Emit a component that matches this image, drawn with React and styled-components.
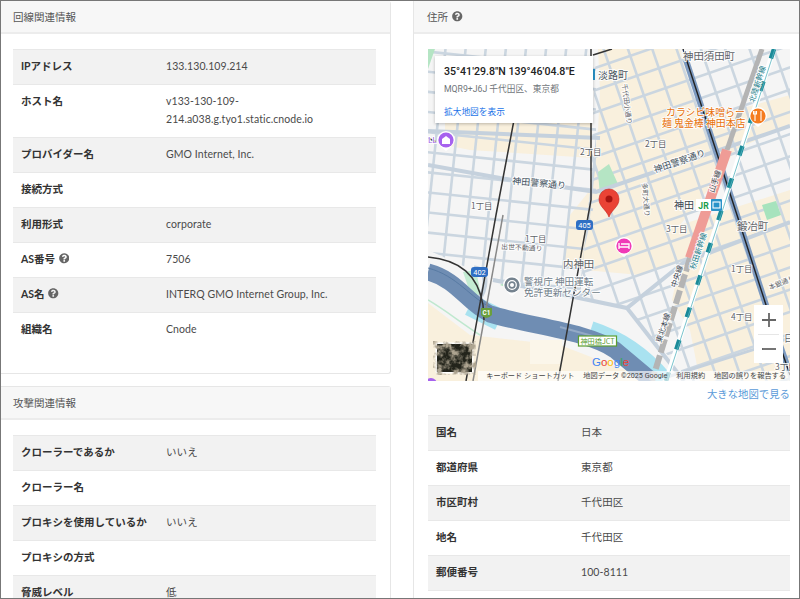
import React from 'react';
import styled, { createGlobalStyle } from 'styled-components';
import { FaQuestionCircle } from 'react-icons/fa';

const GlobalStyle = createGlobalStyle`
    html, body {
        margin: 0;
        padding: 0;
        background: #fff;
    }
    body {
        font-family: Lato, "Noto Sans CJK JP", sans-serif;
        font-size: 10.5px;
        color: #4a4a4a;
    }
`;

// Outer frame of the screenshot
const Frame = styled.div`
    box-sizing: border-box;
    width: 800px;
    height: 599px;
    border: 1px solid #777;
    overflow: hidden;
    display: flex;
    gap: 22px;
    align-items: flex-start;
`;

const LeftColumn = styled.div`
    width: 390px;
    flex: none;
    display: flex;
    flex-direction: column;
    gap: 12px;
`;

const RightColumn = styled.div`
    flex: 1;
    min-width: 0;
`;

const Card = styled.section`
    box-sizing: border-box;
    background: #fff;
    border-bottom: ${props => props.$open ? 'none' : '1px solid #e6e6e6'};
    border-left: ${props => props.$open ? '1px solid #e6e6e6' : 'none'};
    border-top: ${props => props.$first ? 'none' : '1px solid #e6e6e6'};
    border-right: ${props => props.$open ? 'none' : '1px solid #e6e6e6'};
    border-radius: ${props => props.$open ? '0' : '0 3px 3px 0'};
`;

const CardHeader = styled.h3`
    margin: 0;
    height: 31px;
    display: flex;
    align-items: center;
    gap: 3px;
    padding: 0 ${props => props.$open ? '13px' : '12px'};
    background: #f7f7f7;
    border-bottom: 2px solid #ececec;
    font-size: 10.5px;
    font-weight: 400;
    color: #555;
`;

const CardBody = styled.div`
    padding: ${props => props.$open ? '15px 9px 30px 14px' : '15px 14px 26px 12px'};
`;

const HelpIcon = styled(FaQuestionCircle)`
    color: #666;
    font-size: 10.5px;
    margin-left: 1px;
    vertical-align: -1px;
`;

const InfoTable = styled.table`
    width: 100%;
    table-layout: fixed;
    border-collapse: collapse;
    line-height: 17.5px;
    border-bottom: ${props => props.$ruled ? '1px solid #e8e8e8' : 'none'};

    tr:nth-child(odd) {
        background: #f2f2f2;
    }
`;

const Label = styled.th`
    width: 129px;
    padding: 8.25px 8px;
    border-top: 1px solid #e8e8e8;
    text-align: left;
    font-weight: 700;
    color: #333;
    vertical-align: top;
`;

const Value = styled.td`
    padding: 8.25px 8px;
    border-top: 1px solid #e8e8e8;
    vertical-align: top;
    letter-spacing: 0.08px;
    overflow-wrap: anywhere;
`;

// Map box, the overlays below sit on top of the drawing
const MapBox = styled.div`
    position: relative;
    width: 362px;
    height: 332px;
    overflow: hidden;
    background: #f5f5f5;

    svg {
        display: block;
    }
`;

const PlaceCard = styled.div`
    position: absolute;
    left: 7px;
    top: 7px;
    box-sizing: border-box;
    width: 158px;
    height: 67px;
    padding: 9px 9px;
    background: #fff;
    box-shadow: 0 1px 3px rgba(0, 0, 0, 0.25);
    font-family: Roboto, "Noto Sans CJK JP", sans-serif;
`;

const PlaceTitle = styled.div`
    font-size: 10.6px;
    font-weight: 500;
    line-height: 14px;
    color: #222;
    white-space: nowrap;
`;

const PlaceCode = styled.div`
    margin-top: 4px;
    font-size: 8.7px;
    line-height: 12px;
    color: #70757a;
    white-space: nowrap;
`;

const PlaceLink = styled.a`
    display: block;
    margin-top: 11px;
    font-size: 8.7px;
    line-height: 12px;
    color: #1a73e8;
`;

const ZoomBox = styled.div`
    position: absolute;
    left: 326px;
    top: 256px;
    width: 29px;
    height: 58px;
    background: #fff;
    display: flex;
    flex-direction: column;
    align-items: center;
`;

const ZoomButton = styled.div`
    width: 21px;
    height: 29px;
    display: flex;
    align-items: center;
    justify-content: center;
    border-top: ${props => props.$divider ? '1px solid #e6e6e6' : 'none'};
    box-sizing: border-box;
    color: #666;
`;

const Attribution = styled.div`
    position: absolute;
    right: 0;
    bottom: 0;
    left: 50px;
    height: 10px;
    display: flex;
    justify-content: flex-end;
    gap: 9px;
    padding: 0 4px;
    background: rgba(255, 255, 255, 0.65);
    font-family: Roboto, "Noto Sans CJK JP", sans-serif;
    font-size: 7.2px;
    line-height: 10px;
    color: #444;
    white-space: nowrap;
`;

const MapMoreRow = styled.div`
    height: 34px;
    display: flex;
    justify-content: flex-end;
    align-items: flex-start;
    padding-top: 5px;
    box-sizing: border-box;
`;

const MapMoreLink = styled.a`
    font-size: 10.4px;
    line-height: 16px;
    color: #5b9bd9;
`;

const lineRows = [
    { label: 'IPアドレス', value: '133.130.109.214' },
    { label: 'ホスト名', value: 'v133-130-109-214.a038.g.tyo1.static.cnode.io' },
    { label: 'プロバイダー名', value: 'GMO Internet, Inc.' },
    { label: '接続方式', value: '' },
    { label: '利用形式', value: 'corporate' },
    { label: 'AS番号', value: '7506', help: true },
    { label: 'AS名', value: 'INTERQ GMO Internet Group, Inc.', help: true },
    { label: '組織名', value: 'Cnode' },
];

const attackRows = [
    { label: 'クローラーであるか', value: 'いいえ' },
    { label: 'クローラー名', value: '' },
    { label: 'プロキシを使用しているか', value: 'いいえ' },
    { label: 'プロキシの方式', value: '' },
    { label: '脅威レベル', value: '低' },
];

const addressRows = [
    { label: '国名', value: '日本' },
    { label: '都道府県', value: '東京都' },
    { label: '市区町村', value: '千代田区' },
    { label: '地名', value: '千代田区' },
    { label: '郵便番号', value: '100-8111' },
];

// Map labels in page coordinates: [text, x, y, size, colour, rotation]
const GRAY = '#5f6368';
const mapLabels = [
    ['淡路町', 598, 79, 10, '#4a5560'],
    ['神田須田町', 683, 60, 10.4, GRAY],
    ['千代田小通り', 622, 84, 6.8, GRAY, 83],
    ['2丁目', 580, 155, 8.4, GRAY],
    ['2丁目', 645, 147, 8.4, GRAY],
    ['神田警察通り', 512, 184, 9, '#44525e', 5],
    ['神田警察通り', 655, 173, 9, '#44525e', -19],
    ['1丁目', 471, 209, 8.4, GRAY],
    ['1丁目', 525, 242, 8.4, GRAY],
    ['出世不動通り', 501, 249, 6.9, GRAY, 3],
    ['内神田', 563, 268, 10.4, GRAY],
    ['警視庁 神田運転', 524, 285, 9.6, '#6f7c88'],
    ['免許更新センター', 524, 296, 9.6, '#6f7c88'],
    ['神田', 674, 209, 10, '#3c4650'],
    ['3丁目', 666, 232, 8.4, GRAY],
    ['鍛冶町', 737, 230, 10.4, GRAY],
    ['1丁目', 731, 272, 8.4, GRAY],
    ['4丁目', 731, 320, 8.4, GRAY],
    ['3丁目', 775, 370, 8.4, GRAY],
    ['日', 784, 342, 9, GRAY],
    ['本銀通り', 770, 290, 6.8, GRAY, -22],
    ['多町大通り', 642, 183, 6.8, GRAY, 85],
    ['山手線', 714, 193, 7.6, '#3c4650', -72],
    ['北陸新幹線', 754, 103, 7.6, '#1b7f8c', -72],
    ['秋田新幹線', 695, 270, 7.6, '#1b7f8c', -72],
    ['中央線', 676, 288, 7.6, '#3c4650', -72],
    ['東北本線', 661, 343, 7.6, '#3c4650', -72],
    ['カラシビ味噌らー', 666, 116, 9.9, '#e8710a'],
    ['麺 鬼金棒 神田本店', 662, 127, 9.9, '#e8710a'],
];

const Range = (from, to, step) => {
    const out = [];
    for (let v = from; v <= to; v += step) out.push(v);
    return out;
};

const MapLabel = styled.text`
    font-family: "Noto Sans CJK JP", sans-serif;
    paint-order: stroke;
    stroke: rgba(255, 255, 255, 0.9);
    stroke-width: 2px;
    stroke-linejoin: round;
`;

const MapPin = ({ x, y, color, children }) => (
    <g>
        <path d={`M${x - 9} ${y} a9 9 0 1 1 18 0 q0 4 -9 11 q-9 -7 -9 -11z`} fill="#fff" />
        <circle cx={x} cy={y} r="7.6" fill={color} />
        {children}
    </g>
);

const Grid = ({ rotate, cx, cy, clip, xs, ys }) => (
    <g clipPath={clip}>
        <g transform={`rotate(${rotate} ${cx} ${cy})`} stroke="#cbd6e0" strokeWidth="2.6" fill="none">
            {xs.map(x => <path key={'v' + x} d={`M${x} -100V700`} />)}
            {ys.map(y => <path key={'h' + y} d={`M300 ${y}H1000`} />)}
        </g>
    </g>
);

function MapDrawing() {
    return (
        <svg width="362" height="332" viewBox="428 49 362 332">
            <defs>
                <clipPath id="leftArea">
                    <path d="M428 49H596V196L584 250 580 300 490 278 428 250Z" />
                </clipPath>
                <clipPath id="rightArea">
                    <path d="M596 49H790V381H690L627 308 580 296 590 190Z" />
                </clipPath>
                <filter id="satellite">
                    <feTurbulence type="fractalNoise" baseFrequency="0.16" numOctaves="3" seed="4" />
                    <feColorMatrix values="0 0 0 0 0.42  0 0 0 0 0.37  0 0 0 0 0.28  0 0 0 3 -1.2" />
                </filter>
            </defs>

            <rect x="428" y="49" width="362" height="332" fill="#f5f5f5" />

            {/* beige built-up areas */}
            <g fill="#f9f0dd">
                <path d="M445 122H592V158L470 150 445 145Z" />
                <path d="M598 49H680L700 120 790 95V125L735 150 720 175 680 225 790 190V381H700L690 330 672 300 680 262 640 275 562 268 570 215 590 190 598 130 600 90Z" />
                <path d="M428 303 470 335 560 345 630 372 650 381H428Z" />
            </g>
            <rect x="530" y="340" width="32" height="24" fill="#fbf6ea" />

            <Grid rotate={6} cx={500} cy={200} clip="url(#leftArea)"
                xs={Range(430, 600, 20)} ys={Range(60, 290, 20)} />
            <Grid rotate={-19} cx={700} cy={200} clip="url(#rightArea)"
                xs={Range(520, 900, 23)} ys={Range(20, 460, 21)} />

            {/* green parks */}
            <path d="M600 196l-2 -24 11 -8 9 20z" fill="#b5e5c4" />
            <path d="M428 49h7l-7 20z" fill="#b5e5c4" />
            <path d="M762 205l14 -4 5 14 -14 5z" fill="#a7e3bd" />
            <path d="M500 285l5 -3 3 6z" fill="#b5e5c4" />
            <path d="M463 272 476 270 482 300 474 304z" fill="#c4ecd2" />

            {/* bigger roads */}
            <g stroke="#c5d1dd" strokeWidth="4" fill="none">
                <path d="M428 165 500 178 596 192 790 126" />
                <path d="M428 131 600 138" />
                <path d="M493 280 627 308 683 263 790 222" />
                <path d="M627 308 684 381" />
                <path d="M655 381 790 338" strokeWidth="3" />
            </g>

            {/* water beside the expressway */}
            <path d="M590 332C615 340 640 355 662 381" stroke="#a9e2f0" strokeWidth="22" fill="none" />
            <path d="M470 305 500 320" stroke="#a9e2f0" strokeWidth="22" fill="none" />
            <path d="M428 300C445 310 460 322 480 335" stroke="#bfe8cf" strokeWidth="1.5" fill="none" />
            <path d="M474 268C490 270 486 290 478 300" stroke="#c5d1dd" strokeWidth="5" fill="none" />

            {/* expressway */}
            <path d="M428 272C458 280 466 302 490 314 530 326 590 332 615 350L652 381" stroke="#6f8db3" strokeWidth="17" fill="none" />
            <path d="M428 268C458 276 470 298 492 308" stroke="#577aa3" strokeWidth="1" fill="none" />
            <path d="M560 327 600 338" stroke="#93a9c6" strokeWidth="2" fill="none" />

            {/* rail and highway lines */}
            <path d="M686 60 737 215 766 305 787 365" stroke="#7d9ac0" strokeWidth="6" fill="none" />
            <path d="M683 49 737 215 766 305 790 375" stroke="#222" strokeWidth="1.4" fill="none" />
            <g stroke="#333" strokeWidth="1.5" fill="none">
                <path d="M514 120 496 215 466 381" />
                <path d="M503 215 473 381" stroke="#888" />
                <path d="M591 49V200L558 381" />
                <path d="M593 55 612 49" />
                <path d="M428 138 436 142" />
                <path d="M428 257C460 260 478 275 483 305L484 320" />
            </g>

            {/* Station lines */}
            <path d="M762 49 727 150" stroke="#b4b4b4" strokeWidth="5" fill="none" />
            <path d="M690 258 652 381" stroke="#b4b4b4" strokeWidth="6" strokeDasharray="14 3" fill="none" />
            <path d="M727 150 690 258" stroke="#ef9c96" strokeWidth="10" fill="none" />
            <path d="M774 49 666 381" stroke="#fff" strokeWidth="5" fill="none" />
            <path d="M774 49 666 381" stroke="#1b8a98" strokeWidth="4.5" strokeDasharray="10 24" fill="none" />
            <path d="M775 49 667 381" stroke="#57b4bf" strokeWidth="0.8" fill="none" />

            {mapLabels.map(([text, x, y, size, color, rot], i) => (
                <MapLabel key={i} x={x} y={y} fontSize={size} fill={color}
                    transform={rot ? `rotate(${rot} ${x} ${y})` : undefined}>{text}</MapLabel>
            ))}
            <MapLabel x="428" y="143" fontSize="8" fill="#a060e8">LL</MapLabel>

            {/* road shields */}
            <rect x="576" y="220" width="17" height="10" rx="3" fill="#2f6fc4" />
            <text x="584.5" y="228" fontSize="7.4" fill="#fff" textAnchor="middle" fontFamily="Roboto">405</text>
            <rect x="471" y="267" width="17" height="10" rx="3" fill="#2f6fc4" />
            <text x="479.5" y="275" fontSize="7.4" fill="#fff" textAnchor="middle" fontFamily="Roboto">402</text>
            <path d="M481 308h11v7q-5.500 6 -11 0z" fill="#6a9f3c" />
            <text x="486.500" y="315" fontSize="6.4" fill="#fff" textAnchor="middle" fontFamily="Roboto" fontWeight="700">C1</text>
            <rect x="578.500" y="336" width="38" height="10" fill="#fff" stroke="#5c9e31" strokeWidth="1.2" />
            <text x="597.500" y="344" fontSize="7.2" fill="#5c9e31" textAnchor="middle" fontFamily="'Noto Sans CJK JP'">神田橋JCT</text>

            {/* place pins */}
            <MapPin x={446} y={140} color="#a662ee">
                <path d="M442 144v-5l4 -3 4 3v5z" fill="#fff" />
            </MapPin>
            <MapPin x={758} y={116} color="#f57c1f">
                <path d="M755 111v10M761 111v10M753.500 111v3h3v-3" stroke="#fff" strokeWidth="1.1" fill="none" />
            </MapPin>
            <MapPin x={624} y={246} color="#f03bb7">
                <path d="M619 243v6M619 247h10v2M621 244h8v3" stroke="#fff" strokeWidth="1.3" fill="none" />
            </MapPin>
            <MapPin x={512} y={285} color="#75838f">
                <circle cx="512" cy="285" r="4.300" fill="none" stroke="#fff" strokeWidth="1.3" />
                <circle cx="512" cy="285" r="2" fill="#fff" />
            </MapPin>
            <circle cx="431" cy="384" r="6" fill="#a662ee" />

            {/* station badges */}
            <rect x="696" y="199" width="15" height="12" fill="#fff" />
            <text x="703.500" y="208.500" fontSize="8.600" fontWeight="700" fill="#1a9c4b" textAnchor="middle" fontFamily="Roboto">JR</text>
            <rect x="711" y="199" width="11" height="12" rx="1" fill="#2a93c9" />
            <rect x="713" y="202" width="7" height="6" fill="none" stroke="#fff" strokeWidth="1.100" />
            <rect x="591" y="69" width="4" height="11" fill="#2a93c9" />

            {/* target pin */}
            <path d="M609 217C606 209 599 207 599 199a10 10 0 0 1 20 0C619 207 612 209 609 217Z" fill="#ea4335" stroke="#c5221f" strokeWidth="0.6" />
            <circle cx="609" cy="199" r="3.500" fill="#a61410" />

            {/* satellite thumbnail */}
            <rect x="435.500" y="342.500" width="38" height="31" rx="2" fill="#fff" />
            <rect x="437" y="344" width="35" height="28" fill="#23241b" />
            <rect x="437" y="344" width="35" height="28" filter="url(#satellite)" />

            {/* google logo */}
            <text x="592" y="366" fontSize="11.500" fontWeight="500" fontFamily="'Liberation Sans'">
                <tspan fill="#4285f4">G</tspan>
                <tspan fill="#ea4335">o</tspan>
                <tspan fill="#fbbc05">o</tspan>
                <tspan fill="#4285f4">g</tspan>
                <tspan fill="#34a853">l</tspan>
                <tspan fill="#ea4335">e</tspan>
            </text>
        </svg>
    );
}

const Rows = ({ rows, ruled }) => (
    <InfoTable $ruled={ruled}>
        <tbody>
            {rows.map(row => (
                <tr key={row.label}>
                    <Label>{row.label}{row.help && <> <HelpIcon /></>}</Label>
                    <Value>{row.value}</Value>
                </tr>
            ))}
        </tbody>
    </InfoTable>
);

export default function App() {
    return (
        <>
            <GlobalStyle />
            <Frame>
                <LeftColumn>
                    <Card $first>
                        <CardHeader>回線関連情報</CardHeader>
                        <CardBody><Rows rows={lineRows} /></CardBody>
                    </Card>
                    <Card>
                        <CardHeader>攻撃関連情報</CardHeader>
                        <CardBody><Rows rows={attackRows} /></CardBody>
                    </Card>
                </LeftColumn>
                <RightColumn>
                    <Card $first $open>
                        <CardHeader $open>住所 <HelpIcon /></CardHeader>
                        <CardBody $open>
                            <MapBox>
                                <MapDrawing />
                                <PlaceCard>
                                    <PlaceTitle>35°41'29.8"N 139°46'04.8"E</PlaceTitle>
                                    <PlaceCode>MQR9+J6J 千代田区、東京都</PlaceCode>
                                    <PlaceLink>拡大地図を表示</PlaceLink>
                                </PlaceCard>
                                <ZoomBox>
                                    <ZoomButton>
                                        <svg width="14" height="14" viewBox="0 0 14 14"><path d="M7 0V14M0 7H14" stroke="#666" strokeWidth="1.800" /></svg>
                                    </ZoomButton>
                                    <ZoomButton $divider>
                                        <svg width="14" height="14" viewBox="0 0 14 14"><path d="M0 7H14" stroke="#666" strokeWidth="1.800" /></svg>
                                    </ZoomButton>
                                </ZoomBox>
                                <Attribution>
                                    <span>キーボード ショートカット</span>
                                    <span>地図データ ©2025 Google</span>
                                    <span>利用規約</span>
                                    <span>地図の誤りを報告する</span>
                                </Attribution>
                            </MapBox>
                            <MapMoreRow><MapMoreLink>大きな地図で見る</MapMoreLink></MapMoreRow>
                            <Rows rows={addressRows} ruled />
                        </CardBody>
                    </Card>
                </RightColumn>
            </Frame>
        </>
    );
}
